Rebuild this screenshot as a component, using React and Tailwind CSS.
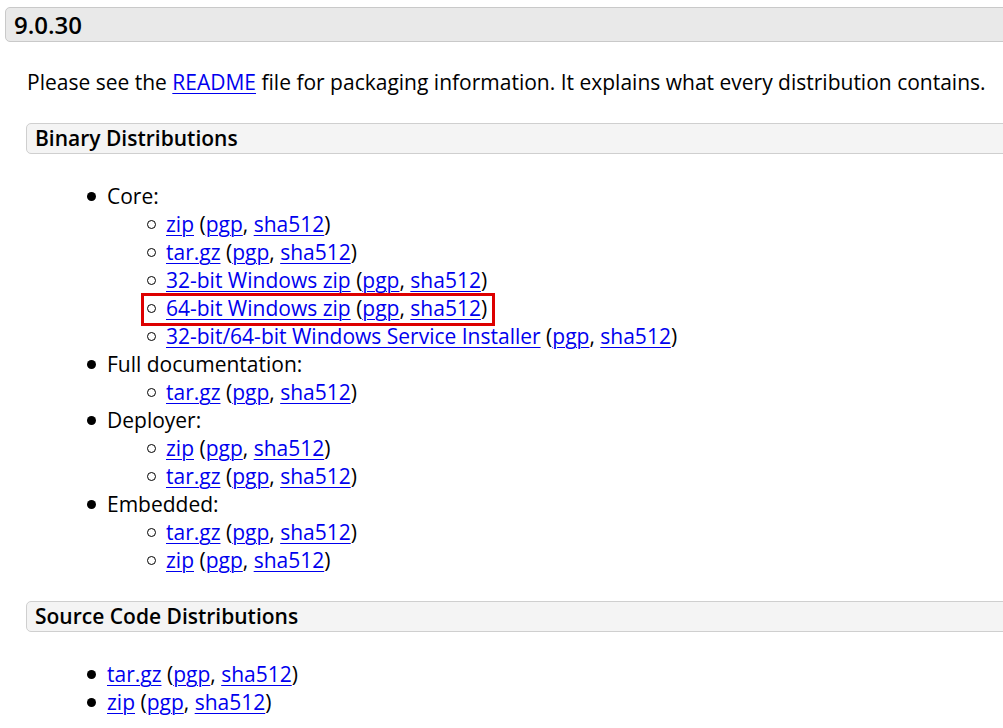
import React from "react";

const L = ({ children }) => (
  <a href="#" className="text-[#0000ee] underline decoration-1 underline-offset-[3px]">
    {children}
  </a>
);

const Sums = () => (
  <>
    {" "}(<L>pgp</L>, <L>sha512</L>)
  </>
);

const Outer = ({ children }) => (
  <div className="flex items-start">
    <div className="h-[28px] flex items-center w-[20px] shrink-0">
      <span className="block w-[9px] h-[9px] rounded-full bg-black" />
    </div>
    <div className="flex-1">{children}</div>
  </div>
);

const OuterLine = ({ children }) => (
  <div className="h-[28px] leading-[28px] whitespace-nowrap">{children}</div>
);

const Inner = ({ children, boxed }) => (
  <div className="flex items-center h-[28px] pl-[40px] whitespace-nowrap">
    <span className="relative flex items-center">
      <span className="block w-[9px] h-[9px] rounded-full border border-black mr-[10px] shrink-0" />
      <span className="leading-[28px]">{children}</span>
      {boxed && (
        <span className="absolute left-[-6px] right-[-8px] top-[-1px] bottom-[-4px] border-[3px] border-[#dd0000] pointer-events-none" />
      )}
    </span>
  </div>
);

export default function App() {
  return (
    <div
      className="w-[1003px] h-[728px] overflow-hidden bg-white text-black text-[21px]"
      style={{ fontFamily: '"Open Sans", "Liberation Sans", sans-serif' }}
    >
      <div className="pt-[7px] pl-[5px]">
        <div className="w-[1030px] h-[35px] bg-[#e9e9e9] border border-[#c9c9c9] rounded-[5px] pl-[8px] flex items-center">
          <span className="text-[24px] font-semibold leading-none">9.0.30</span>
        </div>
      </div>

      <div className="pl-[26px]">
        <p className="mt-[26px] leading-[28px] pl-[1px] whitespace-nowrap">
          Please see the <L>README</L> file for packaging information. It explains what every distribution contains.
        </p>

        <div className="mt-[27px] w-[1010px] h-[31px] bg-[#f4f4f4] border border-[#cfcfcf] rounded-[5px] pl-[8px] flex items-center">
          <span className="text-[21px] font-semibold leading-none">Binary Distributions</span>
        </div>

        <div className="mt-[28px] pl-[61px]">
          <Outer>
            <OuterLine>Core:</OuterLine>
            <Inner><L>zip</L><Sums /></Inner>
            <Inner><L>tar.gz</L><Sums /></Inner>
            <Inner><L>32-bit Windows zip</L><Sums /></Inner>
            <Inner boxed><L>64-bit Windows zip</L><Sums /></Inner>
            <Inner><L>32-bit/64-bit Windows Service Installer</L><Sums /></Inner>
          </Outer>
          <Outer>
            <OuterLine>Full documentation:</OuterLine>
            <Inner><L>tar.gz</L><Sums /></Inner>
          </Outer>
          <Outer>
            <OuterLine>Deployer:</OuterLine>
            <Inner><L>zip</L><Sums /></Inner>
            <Inner><L>tar.gz</L><Sums /></Inner>
          </Outer>
          <Outer>
            <OuterLine>Embedded:</OuterLine>
            <Inner><L>tar.gz</L><Sums /></Inner>
            <Inner><L>zip</L><Sums /></Inner>
          </Outer>
        </div>

        <div className="mt-[27px] w-[1010px] h-[31px] bg-[#f4f4f4] border border-[#cfcfcf] rounded-[5px] pl-[8px] flex items-center">
          <span className="text-[21px] font-semibold leading-none">Source Code Distributions</span>
        </div>

        <div className="mt-[28px] pl-[61px]">
          <Outer>
            <OuterLine><L>tar.gz</L><Sums /></OuterLine>
          </Outer>
          <Outer>
            <OuterLine><L>zip</L><Sums /></OuterLine>
          </Outer>
        </div>
      </div>
    </div>
  );
}
